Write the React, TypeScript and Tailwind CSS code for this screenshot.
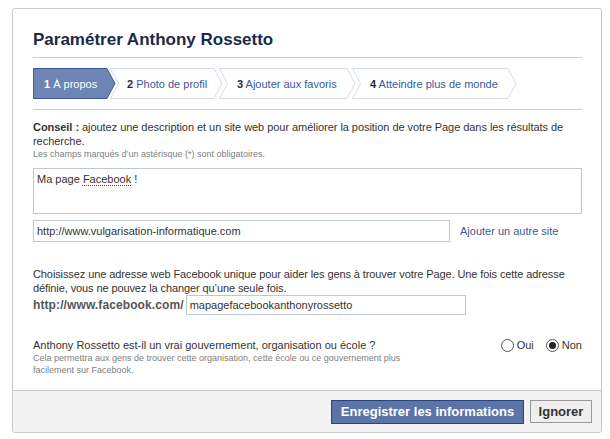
const FONT = { fontFamily: '"Liberation Sans", Arial, sans-serif' };

type Step = { n: string; label: string; w: number; cls: string; active?: boolean };

const STEPS: Step[] = [
  { n: "1", label: "À propos", w: 83, cls: "w-[83px] pl-[11px]", active: true },
  { n: "2", label: "Photo de profil", w: 113, cls: "w-[113px] pl-[17px] -ml-[6px]" },
  { n: "3", label: "Ajouter aux favoris", w: 137, cls: "w-[137px] pl-[18px] -ml-[4px]" },
  { n: "4", label: "Atteindre plus de monde", w: 165, cls: "w-[165px] pl-[18px] -ml-[4px]" },
];

function Chevron({ w, active }: { w: number; active?: boolean }) {
  const pts = active
    ? `0.5,0.5 ${w - 9},0.5 ${w - 1},15.5 ${w - 9},30.5 0.5,30.5`
    : `0.5,0.5 ${w - 9},0.5 ${w - 1},15.5 ${w - 9},30.5 0.5,30.5 8.5,15.5`;
  return (
    <svg className="absolute inset-0" width={w} height={31} viewBox={`0 0 ${w} 31`}>
      <polygon
        points={pts}
        fill={active ? "#6d84b4" : "#ffffff"}
        stroke={active ? "#3b5998" : "#d4dbe8"}
        strokeWidth={1}
      />
    </svg>
  );
}

function Radio({ checked, label }: { checked?: boolean; label: string }) {
  return (
    <label className="flex items-center gap-[3px]">
      <span className="flex h-[13px] w-[13px] items-center justify-center rounded-full border border-[#555] bg-white">
        {checked && <span className="h-[7px] w-[7px] rounded-full bg-[#222]" />}
      </span>
      <span>{label}</span>
    </label>
  );
}

export default function App() {
  return (
    <div className="h-[439px] w-[610px] bg-white pl-[12px] pt-[8px]" style={FONT}>
      <div className="flex h-[425px] w-[590px] flex-col rounded-[3px] border border-[#c9c9c9] bg-white">
        <div className="flex-1 pl-[20px] pr-[19px] pt-[21px] text-[11px] leading-[14px] text-[#333]">
          <h1 className="text-[17px] font-bold leading-[20px] text-[#1c2a47]">Paramétrer Anthony Rossetto</h1>
          <div className="mt-[7px] h-px bg-[#cccccc]" />

          <div className="mt-[10px] flex h-[31px]">
            {STEPS.map((s) => (
              <div key={s.n} className={"relative flex h-[31px] items-center " + s.cls}>
                <Chevron w={s.w} active={s.active} />
                <span
                  className={
                    "relative whitespace-nowrap text-[11px] " +
                    (s.active ? "text-white" : "text-[#3b5998]")
                  }
                >
                  <b className={s.active ? "" : "text-[#1c2a47]"}>{s.n}</b> {s.label}
                </span>
              </div>
            ))}
          </div>
          <div className="mt-[10px] h-px bg-[#cccccc]" />

          <p className="mt-[10px] tracking-[-0.05px]">
            <b>Conseil :</b> ajoutez une description et un site web pour améliorer la position de votre Page dans les résultats de recherche.
          </p>
          <p className="text-[9px] leading-[12px] text-[#808080]">
            Les champs marqués d’un astérisque (*) sont obligatoires.
          </p>

          <div className="mt-[8px] h-[46px] border border-[#bdc7d8] px-[3px] pt-[3px]">
            Ma page{" "}
            <span className="underline decoration-[#e00] decoration-dotted underline-offset-2">Facebook</span> !
          </div>

          <div className="mt-[6px] flex items-center">
            <div className="flex h-[22px] w-[417px] items-center border border-[#bdc7d8] px-[3px]">
              http://www.vulgarisation-informatique.com
            </div>
            <span className="ml-[10px] text-[#3b5998]">Ajouter un autre site</span>
          </div>

          <p className="mt-[25px] tracking-[-0.1px]">
            Choisissez une adresse web Facebook unique pour aider les gens à trouver votre Page. Une fois cette adresse définie, vous ne pouvez la changer qu’une seule fois.
          </p>
          <div className="flex items-center">
            <b className="text-[12px] tracking-[0.1px] text-[#555]">http://www.facebook.com/</b>
            <div className="ml-[2px] flex h-[20px] w-[280px] items-center border border-[#bdc7d8] px-[3px]">
              mapagefacebookanthonyrossetto
            </div>
          </div>

          <div className="mt-[23px] flex justify-between">
            <div>
              <p>Anthony Rossetto est-il un vrai gouvernement, organisation ou école ?</p>
              <p className="w-[400px] text-[9px] leading-[12px] text-[#808080]">
                Cela permettra aux gens de trouver cette organisation, cette école ou ce gouvernement plus facilement sur Facebook.
              </p>
            </div>
            <div className="flex h-[14px] items-center gap-[12px]">
              <Radio label="Oui" />
              <Radio label="Non" checked />
            </div>
          </div>
        </div>

        <div className="flex h-[42px] items-center justify-end gap-[6px] rounded-b-[3px] border-t border-[#cccccc] bg-[#f2f2f2] pr-[9px]">
          <button className="h-[24px] w-[193px] border border-[#29447e] bg-[#5b74a8] text-[13px] font-bold text-white">
            Enregistrer les informations
          </button>
          <button className="h-[23px] w-[62px] border border-[#999] bg-[#eeeeee] text-[13px] font-bold text-[#333]">
            Ignorer
          </button>
        </div>
      </div>
    </div>
  );
}
